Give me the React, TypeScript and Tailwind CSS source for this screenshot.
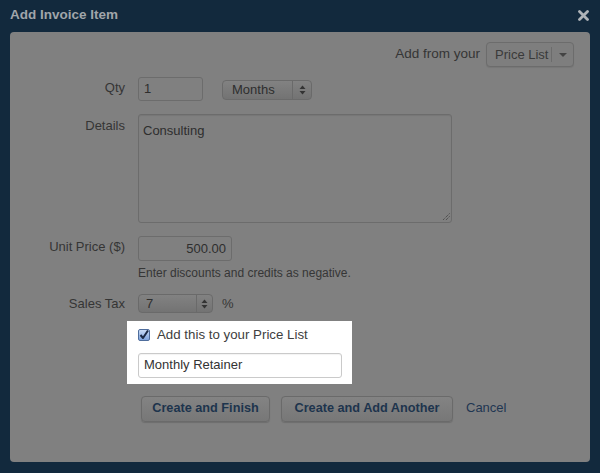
import React from "react";

function Label({ children, className = "" }: { children: React.ReactNode; className?: string }) {
  return <div className={`w-[115px] shrink-0 text-right text-[13px] leading-[16px] text-[#353535] ${className}`}>{children}</div>;
}

function UpDown() {
  return (
    <svg width="7" height="10" viewBox="0 0 7 10">
      <path d="M3.5 0.5 L6.5 4 L0.5 4 Z" fill="#333" />
      <path d="M3.5 9.5 L6.5 6 L0.5 6 Z" fill="#333" />
    </svg>
  );
}

export default function App() {
  return (
    <div className="w-[600px] h-[473px] bg-[#12293d] font-['Liberation_Sans',Arial,sans-serif] flex flex-col">
      <div className="h-[32px] flex items-start justify-between pl-[10px] pr-[11px] pt-[8px] shrink-0">
        <span className="text-[13.5px] font-bold text-[#a0a5aa] leading-none">Add Invoice Item</span>
        <svg width="11" height="11" viewBox="0 0 11 11" className="mt-[2px]">
          <path d="M1.5 1.5 L9.5 9.5 M9.5 1.5 L1.5 9.5" stroke="#aeb3b8" strokeWidth="2.8" strokeLinecap="round" />
        </svg>
      </div>
      <div className="mx-[10px] w-[580px] h-[430px] bg-[#808080] rounded-[4px] pt-[10px] text-[13px] text-[#333] flex flex-col">
        {/* Price list */}
        <div className="flex justify-end items-center h-[25px] pr-[16px]">
          <span className="mr-[6px] text-[13.5px] text-[#353535]">Add from your</span>
          <div className="w-[88px] h-[25px] border border-[#6c6c6c] rounded-[4px] flex items-stretch bg-[#7e7e7e] shadow-[0_1px_1px_rgba(0,0,0,0.08)]">
            <div className="w-[65px] flex items-center pl-[8px] text-[#3a3a3a] border-r border-[#6c6c6c] my-[4px]">Price List</div>
            <div className="flex-1 flex items-center justify-center">
              <svg width="8" height="4" viewBox="0 0 8 4"><path d="M0 0 L8 0 L4 4 Z" fill="#444" /></svg>
            </div>
          </div>
        </div>

        {/* Qty */}
        <div className="flex mt-[10px]">
          <Label className="pt-[3px]">Qty</Label>
          <div className="ml-[13px] flex items-center gap-[19px]">
            <div className="w-[65px] h-[24px] border border-[#6c6c6c] rounded-[3px] pl-[5px] flex items-center text-[#2e2e2e]">1</div>
            <div className="w-[90px] h-[20px] border border-[#6a6a6a] rounded-[4px] flex items-stretch bg-gradient-to-b from-[#828282] to-[#737373] mt-[2px]">
              <div className="w-[70px] flex items-center pl-[9px] text-[#2e2e2e] border-r border-[#6a6a6a]">Months</div>
              <div className="flex-1 flex items-center justify-center"><UpDown /></div>
            </div>
          </div>
        </div>

        {/* Details */}
        <div className="flex mt-[13px]">
          <Label className="pt-[4px]">Details</Label>
          <div className="ml-[13px] w-[314px] h-[109px] border border-[#6c6c6c] rounded-[3px] pl-[4px] pt-[6px] text-[#2e2e2e] relative shadow-[inset_0_1px_1px_rgba(0,0,0,0.08)]">
            Consulting
            <svg width="8" height="8" viewBox="0 0 8 8" className="absolute right-[1px] bottom-[1px]">
              <path d="M7.5 0.5 L0.5 7.5 M7.5 3.5 L3.5 7.5" stroke="#333" strokeWidth="0.9" strokeDasharray="1 1" />
            </svg>
          </div>
        </div>

        {/* Unit price */}
        <div className="flex mt-[13px]">
          <Label className="pt-[3px]">Unit Price ($)</Label>
          <div className="ml-[13px] w-[94px] h-[25px] border border-[#6c6c6c] rounded-[3px] pr-[5px] flex items-center justify-end text-[#2e2e2e]">500.00</div>
        </div>
        <div className="ml-[128px] mt-[5px] text-[12px] leading-[15px] text-[#363636]">Enter discounts and credits as negative.</div>

        {/* Sales tax */}
        <div className="flex mt-[13px] items-center">
          <Label>Sales Tax</Label>
          <div className="ml-[13px] flex items-center gap-[9px]">
            <div className="w-[75px] h-[19px] border border-[#6a6a6a] rounded-[4px] flex items-stretch bg-gradient-to-b from-[#828282] to-[#737373]">
              <div className="w-[58px] flex items-center pl-[7px] text-[#2e2e2e] border-r border-[#6a6a6a]">7</div>
              <div className="flex-1 flex items-center justify-center"><UpDown /></div>
            </div>
            <span className="text-[#353535]">%</span>
          </div>
        </div>

        {/* Highlight */}
        <div className="ml-[117px] mt-[7px] w-[225px] h-[63px] bg-white pl-[11px] pt-[8px]">
          <div className="flex items-center h-[12px] gap-[7px]">
            <span className="w-[12px] h-[12px] rounded-[2px] border border-[#4f6d9c] bg-gradient-to-b from-[#c9dbf5] to-[#7fa3dc] flex items-center justify-center shrink-0">
              <svg width="10" height="10" viewBox="0 0 10 10">
                <path d="M1.5 5 L4 8 L9 0.5" stroke="#1b2944" strokeWidth="2" fill="none" strokeLinejoin="round" />
              </svg>
            </span>
            <span className="text-[13.3px] text-[#404040] leading-none">Add this to your Price List</span>
          </div>
          <div className="mt-[12px] w-[204px] h-[25px] border border-[#cacaca] rounded-[3px] pl-[5px] flex items-center text-[#333] shadow-[inset_0_1px_1px_rgba(0,0,0,0.05)]">Monthly Retainer</div>
        </div>

        {/* Buttons */}
        <div className="ml-[131px] mt-[12px] flex items-center">
          <div className="w-[129px] h-[26px] border border-[#6a6a6a] rounded-[4px] bg-gradient-to-b from-[#838383] to-[#777777] shadow-[0_1px_1px_rgba(0,0,0,0.15)] flex items-center justify-center text-[12.7px] font-bold text-[#1d344d]">Create and Finish</div>
          <div className="ml-[11px] w-[172px] h-[26px] border border-[#6a6a6a] rounded-[4px] bg-gradient-to-b from-[#838383] to-[#777777] shadow-[0_1px_1px_rgba(0,0,0,0.15)] flex items-center justify-center text-[12.7px] font-bold text-[#1d344d]">Create and Add Another</div>
          <span className="ml-[13px] text-[13px] text-[#1f3652] mt-[-2px]">Cancel</span>
        </div>
      </div>
    </div>
  );
}
